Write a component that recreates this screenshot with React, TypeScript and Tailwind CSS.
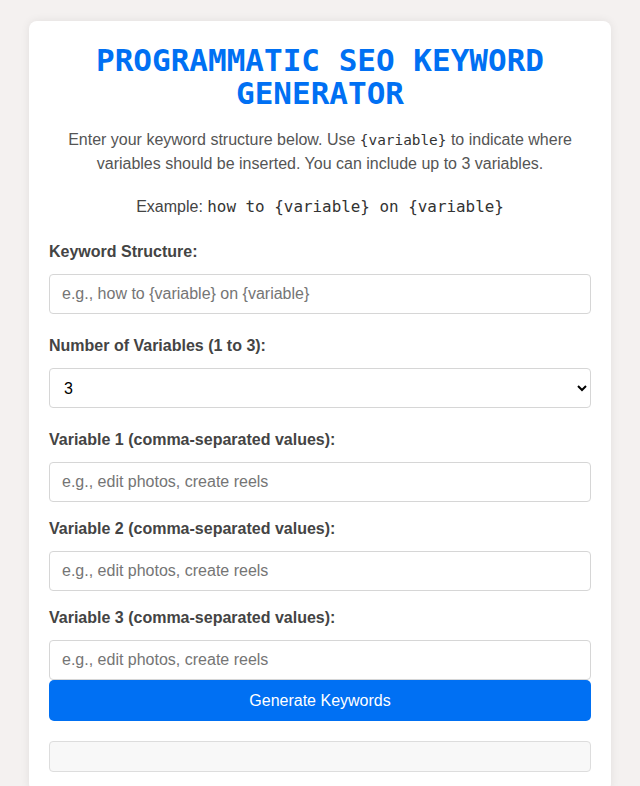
import React from "react"

const sans = "font-['Liberation_Sans',Arial,sans-serif]"
const mono = "font-['DejaVu_Sans_Mono',Menlo,monospace]"

function Field({label, placeholder, last}: {label: string; placeholder: string; last?: boolean}) {
  return (
    <div className={last ? "" : "mb-[15px]"}>
      <label className="block mb-[10px] font-bold text-[#444] leading-6">{label}</label>
      <input
        type="text"
        placeholder={placeholder}
        className="block w-full h-10 px-3 border border-[#d6d6d6] rounded-[4px] bg-white text-base placeholder:text-[#757575] outline-none"
      />
    </div>
  )
}

function App() {
  return (
    <div className={`min-h-screen bg-[#f4f1f0] pt-[21px] pb-10 ${sans}`}>
      <div className="w-[582px] mx-auto bg-white rounded-lg shadow-[0_0_10px_rgba(0,0,0,0.08)] px-5 pt-[23px] pb-5">
        <h1 className={`${mono} text-center font-bold text-[31px] leading-[33px] text-[#0070f3]`}>
          PROGRAMMATIC SEO KEYWORD GENERATOR
        </h1>
        <p className="mt-[18px] text-center text-[#555] text-base leading-6">
          Enter your keyword structure below. Use{" "}
          <code className={`${mono} text-[14.4px] text-[#333]`}>{"{variable}"}</code> to indicate where
          variables should be inserted. You can include up to 3 variables.
        </p>
        <p className="mt-[19px] text-center text-[#444] text-base leading-6">
          Example: <code className={`${mono} text-[15.9px] text-[#333]`}>{"how to {variable} on {variable}"}</code>
        </p>

        <div className="mt-[21px]">
          <label className="block mb-[10px] font-bold text-[#444] leading-6">Keyword Structure:</label>
          <input
            type="text"
            placeholder="e.g., how to {variable} on {variable}"
            className="block w-full h-10 px-3 border border-[#d6d6d6] rounded-[4px] bg-white text-base placeholder:text-[#757575] outline-none"
          />
        </div>

        <div className="mt-5">
          <label className="block mb-[10px] font-bold text-[#444] leading-6">Number of Variables (1 to 3):</label>
          <select
            defaultValue="3"
            className="block w-full h-10 px-[10px] border border-[#d6d6d6] rounded-[4px] bg-white text-base text-black outline-none"
          >
            <option value="1">1</option>
            <option value="2">2</option>
            <option value="3">3</option>
          </select>
        </div>

        <div className="mt-5">
          <Field label="Variable 1 (comma-separated values):" placeholder="e.g., edit photos, create reels" />
          <Field label="Variable 2 (comma-separated values):" placeholder="e.g., edit photos, create reels" />
          <Field label="Variable 3 (comma-separated values):" placeholder="e.g., edit photos, create reels" last />
        </div>

        <button className="block w-full h-[41px] bg-[#0070f3] text-white text-base rounded-[5px]">
          Generate Keywords
        </button>

        <div className="mt-5 h-[31px] bg-[#f8f8f8] border border-[#dddddd] rounded-[4px]" />
      </div>
    </div>
  )
}

export default App
